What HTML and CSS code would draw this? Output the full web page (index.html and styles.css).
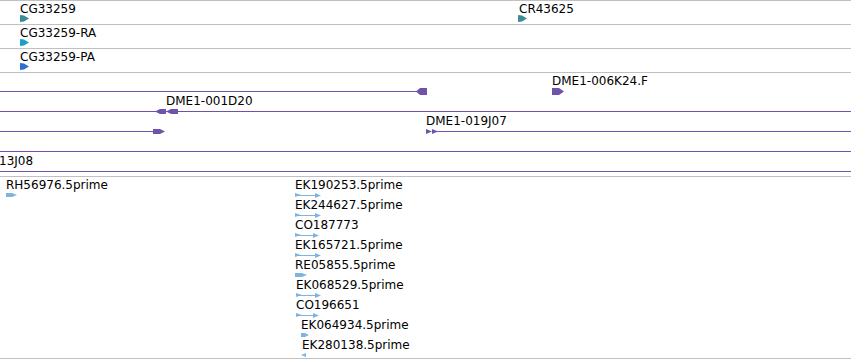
FILE: index.html
```html
<!DOCTYPE html>
<html lang="en">
<head>
    <meta charset="UTF-8">
    <title>Track view</title>
    <link rel="stylesheet" href="styles.css">
</head>
<body>
    <div class="panel">
        <!-- gene -->
        <div class="track short">
            <div class="row" style="top:1px">
                <span class="label" style="left:20px">CG33259</span>
                <span class="label" style="left:519px">CR43625</span>
                <svg class="glyph" width="851" height="8">
                    <polygon class="gene" points="20,0 24,0.5 29,3.5 24,6.5 20,7"/>
                    <polygon class="gene" points="518,0 522,0.5 527,3.5 522,6.5 518,7"/>
                </svg>
            </div>
        </div>
        <!-- mRNA -->
        <div class="track short">
            <div class="row" style="top:1px">
                <span class="label" style="left:20px">CG33259-RA</span>
                <svg class="glyph" width="851" height="8">
                    <polygon class="mrna" points="20,0 24,0.5 29,3.5 24,6.5 20,7"/>
                </svg>
            </div>
        </div>
        <!-- CDS -->
        <div class="track short">
            <div class="row" style="top:1px">
                <span class="label" style="left:20px">CG33259-PA</span>
                <svg class="glyph" width="851" height="8">
                    <polygon class="cds" points="20,0 24,0.5 29,3.5 24,6.5 20,7"/>
                </svg>
            </div>
        </div>
        <!-- BAC ends -->
        <div class="track clones">
            <div class="row" style="top:1px">
                <span class="label" style="left:552px">DME1-006K24.F</span>
                <svg class="glyph" width="851" height="8">
                    <rect class="clone" x="0" y="4" width="418" height="1"/>
                    <polygon class="clone" points="416,4.5 420,1 427,1 427,8 420,8"/>
                    <polygon class="clone" points="552,1 559,1 564,4.5 559,8 552,8"/>
                </svg>
            </div>
            <div class="row" style="top:21px">
                <span class="label" style="left:166px">DME1-001D20</span>
                <svg class="glyph" width="851" height="8">
                    <rect class="clone" x="0" y="4" width="851" height="1"/>
                    <polygon class="clone" points="155,4.5 160,2 166,2 166,7 160,7"/>
                    <polygon class="clone" points="166,4.5 171,2 178,2 178,7 171,7"/>
                </svg>
            </div>
            <div class="row" style="top:41px">
                <span class="label" style="left:426px">DME1-019J07</span>
                <svg class="glyph" width="851" height="8">
                    <rect class="clone" x="0" y="4" width="155" height="1"/>
                    <polygon class="clone" points="153,2 160,2 165,4.5 160,7 153,7"/>
                    <polygon class="clone" points="426,2 432,4.5 426,7"/>
                    <polygon class="clone" points="432,2 438,4.5 432,7"/>
                    <rect class="clone" x="437" y="4" width="414" height="1"/>
                </svg>
            </div>
            <div class="row" style="top:61px">
                <svg class="glyph" width="851" height="8">
                    <rect class="clone" x="0" y="4" width="851" height="1"/>
                </svg>
            </div>
            <div class="row" style="top:81px">
                <span class="label" style="left:-1px">13J08</span>
                <svg class="glyph" width="851" height="8">
                    <rect class="clone" x="0" y="4" width="851" height="1"/>
                </svg>
            </div>
        </div>
        <!-- ESTs -->
        <div class="track est">
            <div class="row" style="top:1px">
                <span class="label" style="left:6px">RH56976.5prime</span>
                <span class="label" style="left:295px">EK190253.5prime</span>
                <svg class="glyph" width="851" height="8">
                    <polygon class="est" points="6,2 12,2 17,4 12,6 6,6"/>
                    <polygon class="est" points="295,2 301,4 295,6"/>
                    <rect class="est" x="297" y="4" width="20" height="1"/>
                    <polygon class="est" points="315,2 321,4.5 315,7"/>
                </svg>
            </div>
            <div class="row" style="top:21px">
                <span class="label" style="left:295px">EK244627.5prime</span>
                <svg class="glyph" width="851" height="8">
                    <polygon class="est" points="295,2 301,4 295,6"/>
                    <rect class="est" x="297" y="4" width="20" height="1"/>
                    <polygon class="est" points="315,2 321,4.5 315,7"/>
                </svg>
            </div>
            <div class="row" style="top:41px">
                <span class="label" style="left:295px">CO187773</span>
                <svg class="glyph" width="851" height="8">
                    <polygon class="est" points="295,2 301,4 295,6"/>
                    <rect class="est" x="297" y="4" width="18" height="1"/>
                    <polygon class="est" points="313,2 319,4.5 313,7"/>
                </svg>
            </div>
            <div class="row" style="top:61px">
                <span class="label" style="left:295px">EK165721.5prime</span>
                <svg class="glyph" width="851" height="8">
                    <polygon class="est" points="295,2 301,4 295,6"/>
                    <rect class="est" x="297" y="4" width="20" height="1"/>
                    <polygon class="est" points="315,2 321,4.5 315,7"/>
                </svg>
            </div>
            <div class="row" style="top:81px">
                <span class="label" style="left:295px">RE05855.5prime</span>
                <svg class="glyph" width="851" height="8">
                    <polygon class="est" points="295,2 302,2 307,4 302,6 295,6"/>
                </svg>
            </div>
            <div class="row" style="top:101px">
                <span class="label" style="left:296px">EK068529.5prime</span>
                <svg class="glyph" width="851" height="8">
                    <polygon class="est" points="296,2 302,4 296,6"/>
                    <rect class="est" x="298" y="4" width="19" height="1"/>
                    <polygon class="est" points="315,2 321,4.5 315,7"/>
                </svg>
            </div>
            <div class="row" style="top:121px">
                <span class="label" style="left:296px">CO196651</span>
                <svg class="glyph" width="851" height="8">
                    <polygon class="est" points="296,2 302,4 296,6"/>
                    <rect class="est" x="298" y="4" width="17" height="1"/>
                    <polygon class="est" points="313,2 319,4.5 313,7"/>
                </svg>
            </div>
            <div class="row" style="top:141px">
                <span class="label" style="left:301px">EK064934.5prime</span>
                <svg class="glyph" width="851" height="8">
                    <polygon class="est" points="301,2 305,2 309,4 305,6 301,6"/>
                </svg>
            </div>
            <div class="row" style="top:161px">
                <span class="label" style="left:302px">EK280138.5prime</span>
                <svg class="glyph" width="851" height="8">
                    <polygon class="est" points="301,4 306,2 306,6"/>
                </svg>
            </div>
        </div>
    </div>
</body>
</html>
```

FILE: styles.css
```css
body { margin: 0; background: #fff; font-family: "DejaVu Sans", sans-serif; font-size: 12px; color: #000; }
.panel { width: 851px; }
.track { position: relative; border-top: 1px solid #c0c0c0; overflow: hidden; }
.track.short { height: 23px; }
.track.clones { height: 103px; }
.track.est { height: 181px; border-bottom: 1px solid #c0c0c0; }
.row { position: absolute; left: 0; right: 0; height: 21px; }
.label { position: absolute; top: 1px; line-height: 13px; white-space: nowrap; }
.glyph { position: absolute; top: 13px; left: 0; display: block; }
.gene { fill: #3a8c96; }
.mrna { fill: #1aa2c6; }
.cds { fill: #2e6fd2; }
.clone { fill: #6f52a9; }
.est { fill: #7fb4e0; }
```
